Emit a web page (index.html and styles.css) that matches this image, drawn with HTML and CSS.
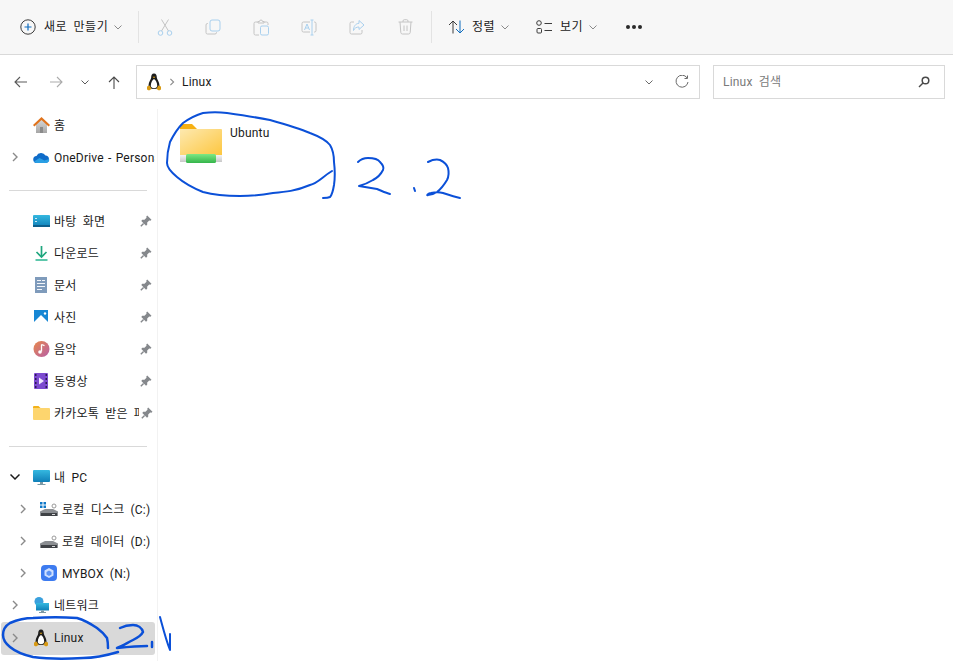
FILE: index.html
```html
<!DOCTYPE html>
<html lang="ko">
  <head>
    <meta charset="UTF-8" />
    <meta name="viewport" content="width=device-width, initial-scale=1.0" />
    <title>Linux</title>
    <link rel="stylesheet" href="styles.css">
  </head>
  <body>
    <svg class="defs" width="0" height="0">
      <defs>
        <linearGradient id="folderFill" x1="0" y1="0" x2="1" y2="1">
          <stop offset="0" stop-color="#fde9b0"/>
          <stop offset="1" stop-color="#fdc63e"/>
        </linearGradient>
        <linearGradient id="greenFill" x1="0" y1="0" x2="0" y2="1">
          <stop offset="0" stop-color="#7ee884"/>
          <stop offset="1" stop-color="#35b54b"/>
        </linearGradient>
        <linearGradient id="barFill" x1="0" y1="0" x2="0" y2="1">
          <stop offset="0" stop-color="#f4f4f4"/>
          <stop offset="1" stop-color="#c8c8c8"/>
        </linearGradient>
        <linearGradient id="deskFill" x1="0" y1="0" x2="0" y2="1">
          <stop offset="0" stop-color="#35b8e0"/>
          <stop offset="1" stop-color="#0f7fb8"/>
        </linearGradient>
        <linearGradient id="musicFill" x1="0" y1="0" x2="1" y2="1">
          <stop offset="0" stop-color="#e8884a"/>
          <stop offset="1" stop-color="#b65fa8"/>
        </linearGradient>
        <linearGradient id="houseFill" x1="0" y1="0" x2="0" y2="1">
          <stop offset="0" stop-color="#d8d8d8"/>
          <stop offset="1" stop-color="#a6a6a6"/>
        </linearGradient>
      </defs>
      <symbol id="tux" viewBox="0 0 16 18">
        <path d="M8 .5C5.800 .5 5.200 2.400 5.200 4.400c0 1.600-2.700 4.600-2.700 8 0 2 2 3.600 5.500 3.600s5.500-1.600 5.500-3.600c0-3.400-2.700-6.400-2.700-8C10.800 2.400 10.200 .5 8 .5z" fill="#1c1c1c"/>
        <path d="M8 6C6.400 6.800 4.800 10 4.800 12.500c0 1.800 1.300 2.800 3.200 2.800s3.200-1 3.200-2.800C11.200 10 9.600 6.800 8 6z" fill="#fff"/>
        <path d="M6.500 3.800 8 5.300l1.500-1.500z" fill="#e0a418"/>
        <path d="M1 13.500 3.800 12.500 5.500 16 3 17.500 1 16.500zM15 13.500l-2.800-1L10.500 16 13 17.500l2-1z" fill="#d89a14"/>
      </symbol>
      <symbol id="pin" viewBox="0 0 12 12">
        <path d="M7.200 .5 11.500 4.800 10.400 5.700 9.200 5.500 7.200 7.500 7.200 9.800 6 10.700 1.300 6 2.200 4.800 4.500 4.800 6.500 2.800 6.300 1.600z" fill="#85888c"/>
        <path d="M3.600 8.400 .8 11.200" stroke="#85888c" stroke-width="1.400" fill="none"/>
      </symbol>
      <symbol id="chev-r" viewBox="0 0 10 10">
        <path d="M3 1 7 5 3 9" fill="none" stroke="#8a8a8a" stroke-width="1.400"/>
      </symbol>
      <symbol id="chev-d" viewBox="0 0 10 10">
        <path d="M1.500 3.500 5 7 8.500 3.500" fill="none" stroke="currentColor" stroke-width="1"/>
      </symbol>
      <symbol id="drive" viewBox="0 0 18 10">
        <path d="M0 4.500 5 2h8l5 2.500V9H0z" fill="#8b8e92"/>
        <path d="M1 6h16v3H1z" fill="#3f4246"/>
        <path d="M12 7h3v1h-3z" fill="#d8dadc"/>
      </symbol>
    </svg>

    <header class="toolbar">
      <button class="cmd cmd-new">
        <svg width="16" height="16" viewBox="0 0 16 16"><circle cx="8" cy="8" r="7.200" fill="none" stroke="#3c3c3c" stroke-width="1"/><path d="M8 4.500v7M4.500 8h7" stroke="#0f6cbd" stroke-width="1.200"/></svg>
        <span>새로 만들기</span>
        <svg class="caret" width="10" height="10"><use href="#chev-d"/></svg>
      </button>
      <div class="sep sep-first"></div>
      <button class="tool">
        <svg width="16" height="17" viewBox="0 0 16 17" fill="none"><path d="M4.500 12 11.500 .5M11.500 12 4.500 .5" stroke="#c4c4c4"/><circle cx="3.500" cy="14" r="2.300" stroke="#a9d0ee"/><circle cx="12.500" cy="14" r="2.300" stroke="#a9d0ee"/></svg>
      </button>
      <button class="tool">
        <svg width="16" height="16" viewBox="0 0 16 16" fill="none"><path d="M3 4.500H2.500A1.500 1.500 0 0 0 1 6v7.500A1.500 1.500 0 0 0 2.500 15H10a1.500 1.500 0 0 0 1.500-1.500V13" stroke="#c4c4c4"/><rect x="5" y="1" width="10" height="11" rx="2" stroke="#a9d0ee"/></svg>
      </button>
      <button class="tool">
        <svg width="16" height="17" viewBox="0 0 16 17" fill="none"><path d="M5 3H2.500A1.500 1.500 0 0 0 1 4.500v10A1.500 1.500 0 0 0 2.500 16H6M11 3h2.500A1.500 1.500 0 0 1 15 4.500V6M5 4V2.500h1.500a1.500 1.500 0 0 1 3 0H11V4z" stroke="#c4c4c4"/><rect x="7.500" y="7" width="8" height="9" rx="1.500" stroke="#a9d0ee"/></svg>
      </button>
      <button class="tool">
        <svg width="16" height="17" viewBox="0 0 16 17" fill="none"><path d="M9 3H2.500A1.500 1.500 0 0 0 1 4.500v7A1.500 1.500 0 0 0 2.500 13H9M13 3h.5A1.500 1.500 0 0 1 15 4.500v7a1.500 1.500 0 0 1-1.500 1.500H13" stroke="#c4c4c4"/><path d="M11 1v15M9.500 1h3M9.500 16h3" stroke="#a9d0ee"/><path d="M3.500 11 6 5l2.500 6M4.500 9h3" stroke="#a9d0ee"/></svg>
      </button>
      <button class="tool">
        <svg width="16" height="16" viewBox="0 0 16 16" fill="none"><path d="M5 3H2.500A1.500 1.500 0 0 0 1 4.500v9A1.500 1.500 0 0 0 2.500 15h9a1.500 1.500 0 0 0 1.500-1.500V11" stroke="#c4c4c4"/><path d="M10 1.500 15 6l-5 4.500V8C7.500 8 5.500 9 4.500 11.500 4.500 7.500 6.500 4.500 10 4.300z" stroke="#a9d0ee"/></svg>
      </button>
      <button class="tool">
        <svg width="15" height="16" viewBox="0 0 15 16" fill="none" stroke="#c4c4c4"><path d="M.500 3h14M5 3V2a1.300 1.300 0 0 1 1.300-1.300h2.400A1.300 1.300 0 0 1 10 2v1M2 3l.8 10.500A1.700 1.700 0 0 0 4.500 15h6a1.700 1.700 0 0 0 1.700-1.500L13 3M6 6.500V12M9 6.500V12"/></svg>
      </button>
      <div class="sep"></div>
      <button class="cmd cmd-sort">
        <svg width="17" height="14" viewBox="0 0 17 14" fill="none"><path d="M5 13.500V1M1 5l4-4 4 4" stroke="#3c3c3c"/><path d="M12 .5V13M8 9l4 4 4-4" stroke="#0f6cbd"/></svg>
        <span>정렬</span>
        <svg class="caret" width="10" height="10"><use href="#chev-d"/></svg>
      </button>
      <button class="cmd cmd-view">
        <svg width="17" height="14" viewBox="0 0 17 14" fill="none" stroke="#3c3c3c"><circle cx="3" cy="3" r="2.300"/><rect x="1" y="8.500" width="4.500" height="4.500" rx="1"/><path d="M8.500 3.500H16M8.500 10.500H16"/></svg>
        <span>보기</span>
        <svg class="caret" width="10" height="10"><use href="#chev-d"/></svg>
      </button>
      <div class="more"><i></i><i></i><i></i></div>
    </header>

    <nav class="navbar">
      <button class="nav-btn">
        <svg width="13" height="12" viewBox="0 0 13 12" fill="none" stroke="#5a5a5a" stroke-width="1.100"><path d="M13 6H1M6 1 1 6l5 5"/></svg>
      </button>
      <button class="nav-btn">
        <svg width="13" height="12" viewBox="0 0 13 12" fill="none" stroke="#ababab" stroke-width="1.100"><path d="M0 6h12M7 1l5 5-5 5"/></svg>
      </button>
      <button class="nav-btn nav-small">
        <svg width="10" height="10"><use href="#chev-d"/></svg>
      </button>
      <button class="nav-btn">
        <svg width="12" height="13" viewBox="0 0 12 13" fill="none" stroke="#4a4a4a" stroke-width="1.100"><path d="M6 13V1M1 6l5-5 5 5"/></svg>
      </button>
      <div class="address">
        <svg class="address-icon" width="16" height="18"><use href="#tux"/></svg>
        <svg class="address-chev" width="8" height="8"><use href="#chev-r"/></svg>
        <span class="address-text">Linux</span>
        <svg class="address-down" width="10" height="10"><use href="#chev-d"/></svg>
        <svg width="14" height="14" viewBox="0 0 14 14" fill="none" stroke="#6a6a6a" stroke-width="1"><path d="M12 2.800A6 6 0 1 0 13 7"/><path d="M12.500 .5V3.500H9.500"/></svg>
      </div>
      <div class="search">
        <span>Linux 검색</span>
        <svg width="12" height="12" viewBox="0 0 12 12" fill="none" stroke="#4a4a4a"><circle cx="7.500" cy="4.500" r="3.300" stroke-width="1.500"/><path d="M5 7 1 11" stroke-width="1.500"/></svg>
      </div>
    </nav>

    <div class="content">
      <aside class="sidebar">
        <div class="row">
          <span class="arrow"></span>
          <svg class="icon" width="17" height="16" viewBox="0 0 17 16"><path d="M3 7 8.500 2.500 14 7v9H3z" fill="url(#houseFill)"/><path d="M7 10h3v6H7z" fill="#8a8a8a"/><path d="M8.500 0 0 8l1.400 1.400 7.100-6.300 7.100 6.300L17 8z" fill="#e0731c"/></svg>
          <span class="label">홈</span>
        </div>
        <div class="row">
          <svg class="arrow" width="10" height="10"><use href="#chev-r"/></svg>
          <svg class="icon" width="17" height="11" viewBox="0 0 17 11"><path d="M4 11a3.500 3.500 0 0 1-.5-7A5 5 0 0 1 12.500 3.500 3.800 3.800 0 0 1 13 11z" fill="#0f6cc9"/><path d="M1 9.500 6.500 6l5 2.500 4.500-1.500a3 3 0 0 1-3 4H4a3.400 3.400 0 0 1-3-1.500z" fill="#2a9fe4"/></svg>
          <span class="label label-latin">OneDrive - Personal</span>
        </div>
        <hr class="divider" />
        <div class="row">
          <span class="arrow"></span>
          <svg class="icon" width="17" height="12" viewBox="0 0 17 12"><rect width="17" height="12" rx="1" fill="url(#deskFill)"/><rect y="10" width="17" height="2" fill="#0d5f8c"/><path d="M2 3h2v1H2zM2 6h2v1H2z" fill="#cdeaf7"/></svg>
          <span class="label">바탕 화면</span>
          <svg class="pin" width="12" height="12"><use href="#pin"/></svg>
        </div>
        <div class="row">
          <span class="arrow"></span>
          <svg class="icon" width="17" height="15" viewBox="0 0 17 15" fill="none"><path d="M8.500 0v10" stroke="#1fa67e" stroke-width="1.700"/><path d="M3.500 6 8.500 11l5-5" stroke="#1fa67e" stroke-width="1.700"/><path d="M2.500 14h12" stroke="#27b58f" stroke-width="1.500"/></svg>
          <span class="label">다운로드</span>
          <svg class="pin" width="12" height="12"><use href="#pin"/></svg>
        </div>
        <div class="row">
          <span class="arrow"></span>
          <svg class="icon" width="17" height="16" viewBox="0 0 17 16"><rect x="2" width="12" height="16" fill="#7f9bbb"/><path d="M4 3h4v1H4zM9 3h3v1H9zM4 6h8v1H4zM4 9h8v1H4zM4 12h5v1H4z" fill="#f2f5f9"/></svg>
          <span class="label">문서</span>
          <svg class="pin" width="12" height="12"><use href="#pin"/></svg>
        </div>
        <div class="row">
          <span class="arrow"></span>
          <svg class="icon" width="17" height="15" viewBox="0 0 17 15"><rect x="1" width="14" height="15" fill="#1787d4"/><path d="M1 12 8 5l7 7v3H1z" fill="#fff"/><circle cx="12" cy="3.500" r="1.200" fill="#fff"/></svg>
          <span class="label">사진</span>
          <svg class="pin" width="12" height="12"><use href="#pin"/></svg>
        </div>
        <div class="row">
          <span class="arrow"></span>
          <svg class="icon" width="17" height="16" viewBox="0 0 17 16"><circle cx="8.500" cy="8" r="8" fill="url(#musicFill)"/><path d="M8.500 3.500v7" stroke="#fff" stroke-width="1.300"/><path d="M8.500 3.500l3 1.200" stroke="#fff" stroke-width="1.300"/><circle cx="7" cy="11" r="1.800" fill="#fff"/></svg>
          <span class="label">음악</span>
          <svg class="pin" width="12" height="12"><use href="#pin"/></svg>
        </div>
        <div class="row">
          <span class="arrow"></span>
          <svg class="icon" width="17" height="16" viewBox="0 0 17 16"><rect x="1" width="14" height="16" rx="1" fill="#7c4ad0"/><path d="M2 1h1.500v2H2zM2 5h1.500v2H2zM2 9h1.500v2H2zM2 13h1.500v2H2zM12.500 1H14v2h-1.500zM12.500 5H14v2h-1.500zM12.500 9H14v2h-1.500zM12.500 13H14v2h-1.500z" fill="#2d1a55"/><path d="M6 4.500 11 8l-5 3.500z" fill="#efe8ff"/></svg>
          <span class="label">동영상</span>
          <svg class="pin" width="12" height="12"><use href="#pin"/></svg>
        </div>
        <div class="row">
          <span class="arrow"></span>
          <svg class="icon" width="17" height="14" viewBox="0 0 17 14"><path d="M0 1a1 1 0 0 1 1-1h4.500l2 2H0z" fill="#f3b21a"/><path d="M0 2h16a1 1 0 0 1 1 1v10a1 1 0 0 1-1 1H1a1 1 0 0 1-1-1z" fill="#fdd56e"/></svg>
          <span class="label label-clip">카카오톡 받은 파일</span>
          <svg class="pin" width="12" height="12"><use href="#pin"/></svg>
        </div>
        <hr class="divider" />
        <div class="row">
          <svg class="arrow" width="10" height="10" viewBox="0 0 10 10"><path d="M.5 2.500 5 7l4.500-4.500" fill="none" stroke="#1a1a1a" stroke-width="1.500"/></svg>
          <svg class="icon" width="17" height="15" viewBox="0 0 17 15"><rect width="17" height="12" rx="1" fill="url(#deskFill)"/><path d="M7 12h3v2H7z" fill="#7c99a5"/><path d="M4.500 14h8v1h-8z" fill="#7c99a5"/></svg>
          <span class="label">내 PC</span>
        </div>
        <div class="row row-child">
          <svg class="arrow" width="10" height="10"><use href="#chev-r"/></svg>
          <svg class="icon" width="18" height="15" viewBox="0 0 18 15"><path d="M0 0h2.500v2.500H0zM3.500 0H6v2.500H3.500zM0 3.500h2.500V6H0zM3.500 3.500H6V6H3.500z" fill="#1078c8"/><circle cx="14" cy="4" r="2" fill="none" stroke="#9a9a9a"/><svg y="5" width="18" height="10"><use href="#drive"/></svg></svg>
          <span class="label">로컬 디스크 (C:)</span>
        </div>
        <div class="row row-child">
          <svg class="arrow" width="10" height="10"><use href="#chev-r"/></svg>
          <svg class="icon" width="18" height="15" viewBox="0 0 18 15"><circle cx="14" cy="4" r="2" fill="none" stroke="#9a9a9a"/><svg y="5" width="18" height="10"><use href="#drive"/></svg></svg>
          <span class="label">로컬 데이터 (D:)</span>
        </div>
        <div class="row row-child">
          <svg class="arrow" width="10" height="10"><use href="#chev-r"/></svg>
          <svg class="icon" width="18" height="16" viewBox="0 0 18 16"><rect x="1" width="16" height="16" rx="4" fill="#3d7bf0"/><path d="M9 3l4.500 2.500v5L9 13l-4.500-2.500v-5z" fill="#cfe0ff"/><path d="M9 5.500 11.500 7v2.500L9 11 6.500 9.500V7z" fill="#5d94f5"/></svg>
          <span class="label">MYBOX (N:)</span>
        </div>
        <div class="row">
          <svg class="arrow" width="10" height="10"><use href="#chev-r"/></svg>
          <svg class="icon" width="17" height="16" viewBox="0 0 17 16"><circle cx="6" cy="4.500" r="4.500" fill="#3aa0dd"/><path d="M3 6h13v7.500H3z" fill="url(#deskFill)"/><path d="M8 13.500h3V15H8zM6 15h7v1H6z" fill="#7c99a5"/></svg>
          <span class="label">네트워크</span>
        </div>
        <div class="row row-selected">
          <svg class="arrow" width="10" height="10"><use href="#chev-r"/></svg>
          <svg class="icon icon-tux" width="16" height="18"><use href="#tux"/></svg>
          <span class="label">Linux</span>
        </div>
      </aside>

      <main class="files">
        <div class="tile">
          <svg width="42" height="40" viewBox="0 0 42 40">
            <path d="M0 3a3 3 0 0 1 3-3h9l5 5H0z" fill="#f6b012"/>
            <path d="M0 5h41a1 1 0 0 1 1 1v26H0z" fill="url(#folderFill)"/>
            <rect y="31" width="42" height="7" fill="url(#barFill)"/>
            <rect x="6" y="30" width="30" height="9" rx="1.500" fill="url(#greenFill)"/>
          </svg>
          <span>Ubuntu</span>
        </div>
      </main>
    </div>

    <svg class="ink" width="953" height="661" viewBox="0 0 953 661" fill="none" stroke="#0b50d8" stroke-width="2" stroke-linecap="round" stroke-linejoin="round">
      <path d="M332 171C322 177 318 183 310 185 296 191 285 192 273 193 262 195 250 196 240 196 226 196 214 195 203 192 193 188 184 183 177 177 171 172 167 168 167 163 167 155 168 149 170 142 174 134 178 128 183 123 190 118 196 115 203 113 211 112 219 112 227 113 241 115 255 117 270 120 284 124 298 128 310 133 318 136 326 140 330 145 333 150 334 156 334 162 335 170 335 178 334 185 333 191 332 195 330 197 328 198 325 198 323 198"/>
      <path d="M358 162C361 159 364 158 368 158 373 158 378 159 380 162 383 165 384 168 383 170 381 174 377 178 373 180 368 183 363 185 359 186 365 187 371 188 377 189 382 191 386 193 390 194"/>
      <path d="M414 188 415 191"/>
      <path d="M428 162C432 160 436 159 440 160 444 162 447 165 448 168 449 172 449 176 447 180 444 185 441 189 437 192 434 194 431 195 428 195 426 196 428 193 431 193 436 192 439 192 443 193 449 195 455 197 460 198"/>
      <g class="ink-thick">
        <path d="M118 652C108 655 96 658 83 658 66 659 48 659 33 657 24 655 16 652 10 647 5 643 3 639 3 635 3 630 5 626 10 623 17 620 25 618 33 618 48 617 63 617 77 618 84 620 91 624 97 628 101 631 105 635 107 638 108 642 108 645 108 648"/>
        <path d="M120 628C124 626 129 625 133 625 138 625 142 628 143 632 141 636 137 638 133 640 127 643 122 646 117 648 127 647 137 646 147 646"/>
        <path d="M152 642 152 647"/>
      </g>
      <path d="M160 617C163 628 166 640 170 650 170 645 170 640 170 634"/>
    </svg>
  </body>
</html>
```

FILE: styles.css
```css
* {
  box-sizing: border-box;
}
html,
body {
  height: 100%;
}
body {
  margin: 0;
  width: 953px;
  height: 661px;
  overflow: hidden;
  display: flex;
  flex-direction: column;
  position: relative;
  background: #fff;
  color: #1a1a1a;
  font-family: Roboto, "Noto Sans CJK KR", sans-serif;
  font-size: 12px;
  line-height: 17px;
  letter-spacing: .2px;
  word-spacing: 3px;
}
button {
  border: 0;
  background: none;
  padding: 0;
  font: inherit;
  word-spacing: inherit;
  color: inherit;
  display: flex;
  align-items: center;
  justify-content: center;
}
.defs {
  position: absolute;
}

/* top command bar */
.toolbar {
  height: 55px;
  flex: none;
  display: flex;
  align-items: center;
  background: #f7f7f7;
  border-bottom: 1px solid #d9d9d9;
  padding-left: 20px;
}
.cmd {
  color: #1a1a1a;
  justify-content: flex-start;
  letter-spacing: .5px;
  white-space: nowrap;
}
.cmd svg {
  flex: none;
}
.caret {
  color: #8a8a8a;
  margin-left: 5px;
}
.cmd-new svg:first-child {
  margin-right: 8px;
}
.cmd-new {
  width: 103px;
}
.cmd-sort,
.cmd-view {
  width: 88px;
}
.cmd-sort svg:first-child,
.cmd-view svg:first-child {
  margin-right: 7px;
}
.cmd-sort {
  margin-left: 16px;
}
.sep {
  width: 1px;
  height: 32px;
  background: #e3e3e3;
}
.sep-first {
  margin-left: 15px;
  margin-right: 2px;
}
.tool {
  width: 48px;
  height: 32px;
}
.tool + .sep {
  margin-left: 2px;
}
.more {
  display: flex;
  gap: 2px;
  margin-left: 2px;
}
.more i {
  width: 4px;
  height: 4px;
  border-radius: 50%;
  background: #2a2a2a;
}

/* back, forward, address, search */
.navbar {
  flex: none;
  height: 54px;
  display: flex;
  align-items: flex-start;
  padding: 10px 8px 0 2px;
}
.nav-btn {
  width: 36px;
  height: 34px;
}
.nav-small {
  width: 22px;
  color: #5a5a5a;
}
.address {
  width: 564px;
  height: 34px;
  margin-left: 4px;
  margin-right: 13px;
  border: 1px solid #d9d9d9;
  display: flex;
  align-items: center;
  padding: 0 10px 0 9px;
}
.address-chev {
  margin-left: 6px;
}
.address-text {
  margin-left: 6px;
  flex: 1;
}
.address-down {
  color: #6a6a6a;
  margin-right: 21px;
}
.search {
  width: 232px;
  height: 34px;
  border: 1px solid #d9d9d9;
  display: flex;
  align-items: center;
  justify-content: space-between;
  padding: 0 14px 0 9px;
  color: #7a7a7a;
}

/* left tree and file area */
.content {
  flex: 1;
  display: flex;
  min-height: 0;
}
.sidebar {
  width: 158px;
  flex: none;
  border-right: 1px solid #f2f2f2;
  padding-left: 1px;
}
.row {
  height: 32px;
  width: 154px;
  display: flex;
  align-items: center;
  padding-left: 9px;
  border-radius: 3px;
}
.row-child {
  padding-left: 17px;
}
.arrow {
  width: 10px;
  height: 10px;
  flex: none;
  margin-right: 13px;
}
.row-child .arrow {
  margin-right: 12px;
}
.icon {
  flex: none;
  margin-right: 4px;
}
.icon-tux {
  margin-right: 5px;
}
.label {
  flex: 1;
  min-width: 0;
  margin-top: 2px;
  white-space: nowrap;
  overflow: hidden;
}
.label-latin {
  word-spacing: 1px;
}
.label-clip {
  flex: none;
  width: 85px;
}
.pin {
  flex: none;
  margin-left: 2px;
  margin-right: 3px;
}
.divider {
  border: 0;
  height: 1px;
  width: 138px;
  background: #d9d9d9;
  margin: 17px 0 14px 8px;
}
.row-selected {
  background: #d9d9d9;
  margin-top: 1px;
  height: 33px;
  padding-bottom: 2px;
}
.files {
  flex: 1;
  padding: 15px 0 0 22px;
}
.tile {
  display: flex;
  align-items: flex-start;
  gap: 8px;
}
.tile span {
  margin-top: 1px;
}

/* pen marks drawn over the screenshot */
.ink {
  position: absolute;
  left: 0;
  top: 0;
  pointer-events: none;
}
.ink-thick {
  stroke-width: 2.5;
}
```
